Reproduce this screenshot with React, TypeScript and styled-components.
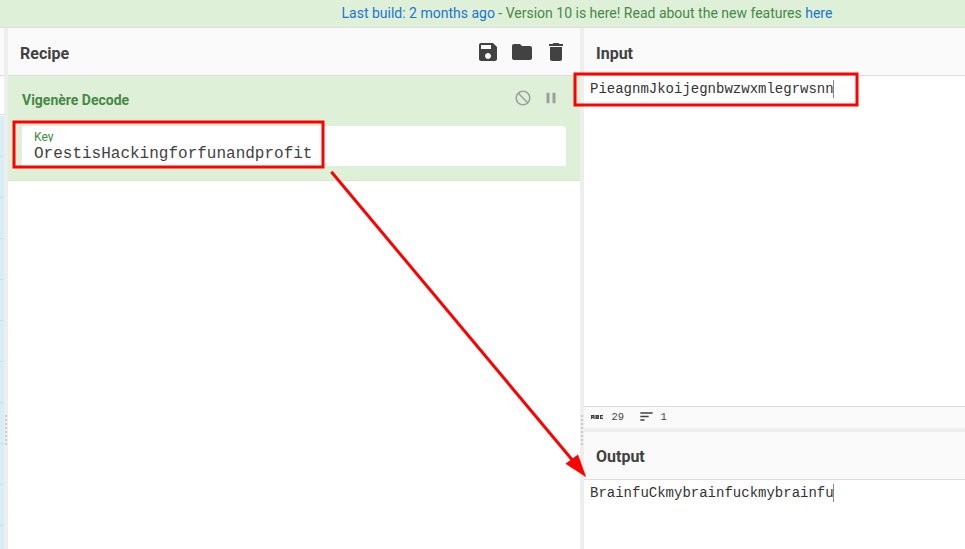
import React from "react";
import styled, { createGlobalStyle } from "styled-components";

const GlobalStyle = createGlobalStyle`
  * { box-sizing: border-box; }
  html, body { margin: 0; padding: 0; overflow: hidden; background: #fff; }
`;

const Page = styled.div`
  position: relative;
  display: flex;
  flex-direction: column;
  width: 965px;
  height: 549px;
  overflow: hidden;
  font-family: Roboto, sans-serif;
  font-size: 14px;
  color: #424242;
`;

const Banner = styled.div`
  flex: none;
  height: 28px;
  padding-left: 341.5px;
  line-height: 26px;
  white-space: nowrap;
  color: #468847;
  background: #dff0d8;
  border-bottom: 1px solid #ddd;
`;

const BannerLink = styled.a`
  color: #1976d2;
  text-decoration: none;
`;

const Workspace = styled.div`
  flex: 1;
  display: flex;
  min-height: 0;
`;

const Operations = styled.div`
  flex: none;
  width: 4px;
  overflow: hidden;
`;

const OperationsTitle = styled.div`
  height: 48px;
  background: #fafafa;
  border-bottom: 1px solid #ddd;
`;

const OperationsSearch = styled.div`
  height: 39px;
  margin-bottom: 1px;
  border-bottom: 1px solid #ddd;
`;

const OperationItem = styled.div`
  height: 41px;
  background: #d9edf7;
  border-bottom: 1px solid #bce8f1;
`;

const Gutter = styled.div`
  flex: none;
  display: flex;
  flex-direction: column;
  align-items: center;
  gap: 2px;
  width: 4px;
  padding-top: 387px;
  background: #eee;
`;

const GripDot = styled.span`
  flex: none;
  width: 2px;
  height: 2px;
  background: #ccc;
`;

const Recipe = styled.section`
  flex: none;
  width: 572px;
`;

const Title = styled.header<{ $top: number }>`
  flex: none;
  display: flex;
  align-items: flex-start;
  justify-content: space-between;
  height: 48px;
  padding: ${(p) => p.$top}px 12px 0;
  font-size: 16px;
  font-weight: 700;
  line-height: 24px;
  background: #fafafa;
  border-bottom: 1px solid #ddd;
`;

const Actions = styled.div`
  display: flex;
  gap: 10px;
  margin-top: -2px;
`;

const Icon = styled.svg<{ $size: number }>`
  display: block;
  width: ${(p) => p.$size}px;
  height: ${(p) => p.$size}px;
  fill: currentColor;
`;

const Operation = styled.article`
  height: 105px;
  padding: 13px 14px 0;
  color: #468847;
  background: #dff0d8;
  border-bottom: 1px solid #d6e9c6;
`;

const OperationHead = styled.div`
  display: flex;
  justify-content: space-between;
  height: 37px;
  line-height: 22px;
  font-weight: 700;
`;

const OperationControls = styled.div`
  display: flex;
  gap: 9.5px;
  padding-right: 6.5px;
  color: #9e9e9e;
`;

const Field = styled.label`
  display: block;
  height: 40px;
  padding: 4px 12px 0;
  background: #fff;
  border-radius: 4px 4px 0 0;
`;

const FieldLabel = styled.div`
  height: 12px;
  overflow: hidden;
  font-size: 12px;
  line-height: 14px;
  color: #388e3c;
`;

const FieldValue = styled.div`
  height: 24px;
  font: 16px/24px "Liberation Mono", monospace;
  color: #424242;
`;

const InputOutput = styled.section`
  flex: 1;
  display: flex;
  flex-direction: column;
  min-width: 0;
`;

const Editor = styled.div<{ $height: number }>`
  flex: none;
  height: ${(p) => p.$height}px;
  padding: 4px 6px;
  background: #fff;
`;

const EditorLine = styled.div`
  width: 244px;
  height: 18px;
  border-right: 1px solid #888;
  font: 14px/18px "Liberation Mono", monospace;
  white-space: nowrap;
  color: #333;
`;

const StatusBar = styled.div`
  flex: none;
  display: flex;
  align-items: center;
  height: 22px;
  padding: 0 6px 2px;
  font: 10.5px/18px "Liberation Mono", monospace;
  background: #fafafa;
  border-top: 1px solid #ddd;
`;

const StatusIcon = styled.svg<{ $gap: number }>`
  display: block;
  flex: none;
  margin-right: ${(p) => p.$gap}px;
  fill: none;
  stroke: #424242;
`;

const StatusValue = styled.span`
  margin-right: 15.5px;
`;

const RowGutter = styled.div`
  flex: none;
  height: 4px;
  background: #eee;
`;

const Annotations = styled.svg`
  position: absolute;
  inset: 0;
  pointer-events: none;
`;

const operationRows = Array.from({ length: 11 }, (_, i) => i);
const gripDots = Array.from({ length: 8 }, (_, i) => i);

const Grip = () => (
  <Gutter>
    {gripDots.map((i) => (
      <GripDot key={i} />
    ))}
  </Gutter>
);

const Glyph = ({ d, size = 24 }: { d: string; size?: number }) => (
  <Icon $size={size} viewBox="0 0 24 24">
    <path d={d} />
  </Icon>
);

export default function App() {
  return (
    <Page>
      <GlobalStyle />
      <Banner>
        <BannerLink>Last build: 2 months ago</BannerLink> - Version 10 is here! Read about the new
        features <BannerLink>here</BannerLink>
      </Banner>
      <Workspace>
        <Operations>
          <OperationsTitle />
          <OperationsSearch />
          {operationRows.map((i) => (
            <OperationItem key={i} />
          ))}
        </Operations>
        <Grip />
        <Recipe>
          <Title $top={14}>
            Recipe
            <Actions>
              <Glyph d="M17 3H5c-1.11 0-2 .9-2 2v14c0 1.1.89 2 2 2h14c1.1 0 2-.9 2-2V7l-4-4zm-5 16c-1.66 0-3-1.34-3-3s1.34-3 3-3 3 1.34 3 3-1.34 3-3 3zm3-10H5V5h10v4z" />
              <Glyph d="M10 4H4c-1.1 0-1.99.9-1.99 2L2 18c0 1.1.9 2 2 2h16c1.1 0 2-.9 2-2V8c0-1.1-.9-2-2-2h-8l-2-2z" />
              <Glyph d="M6 19c0 1.1.9 2 2 2h8c1.1 0 2-.9 2-2V7H6v12zM19 4h-3.5l-1-1h-5l-1 1H5v2h14V4z" />
            </Actions>
          </Title>
          <Operation>
            <OperationHead>
              Vigenère Decode
              <OperationControls>
                <Glyph
                  size={18}
                  d="M12 2C6.48 2 2 6.48 2 12s4.48 10 10 10 10-4.48 10-10S17.52 2 12 2zm0 18c-4.42 0-8-3.58-8-8 0-1.85.63-3.55 1.69-4.9L16.9 18.31C15.55 19.37 13.85 20 12 20zm6.31-3.1L7.1 5.69C8.45 4.63 10.15 4 12 4c4.42 0 8 3.58 8 8 0 1.85-.63 3.55-1.69 4.9z"
                />
                <Glyph size={18} d="M6 19h4V5H6v14zm8-14v14h4V5h-4z" />
              </OperationControls>
            </OperationHead>
            <Field>
              <FieldLabel>Key</FieldLabel>
              <FieldValue>OrestisHackingforfunandprofit</FieldValue>
            </Field>
          </Operation>
        </Recipe>
        <Grip />
        <InputOutput>
          <Title $top={14}>Input</Title>
          <Editor $height={330}>
            <EditorLine>PieagnmJkoijegnbwzwxmlegrwsnn</EditorLine>
          </Editor>
          <StatusBar>
            <StatusIcon $gap={7.5} width="14" height="6" viewBox="0 0 14 6" strokeWidth="1.2">
              <path d="M1.6 5V1.6H4V5M1.6 3.4H4M6 1.6H8.4V4.4H6ZM6 3H8.4M13 1.6H10.6V4.4H13" />
            </StatusIcon>
            <StatusValue>29</StatusValue>
            <StatusIcon $gap={8} width="13" height="9" viewBox="0 0 13 9" strokeWidth="1.4">
              <path d="M.3 1H12.7M.3 4.5H8.7M.3 8H4.5" />
            </StatusIcon>
            <StatusValue>1</StatusValue>
          </StatusBar>
          <RowGutter />
          <Title $top={13}>Output</Title>
          <Editor $height={69}>
            <EditorLine>BrainfuCkmybrainfuckmybrainfu</EditorLine>
          </Editor>
        </InputOutput>
      </Workspace>
      <Annotations width="965" height="549" viewBox="0 0 965 549">
        <g fill="none" stroke="#f00" strokeWidth="3">
          <rect x="14" y="122" width="309" height="45" />
          <rect x="575" y="74" width="282" height="31" />
          <path d="M331.3 171.700L574 462" />
        </g>
        <path d="M586.2 477.200L565.500 463.800L578 454.500Z" fill="#f00" />
      </Annotations>
    </Page>
  );
}
